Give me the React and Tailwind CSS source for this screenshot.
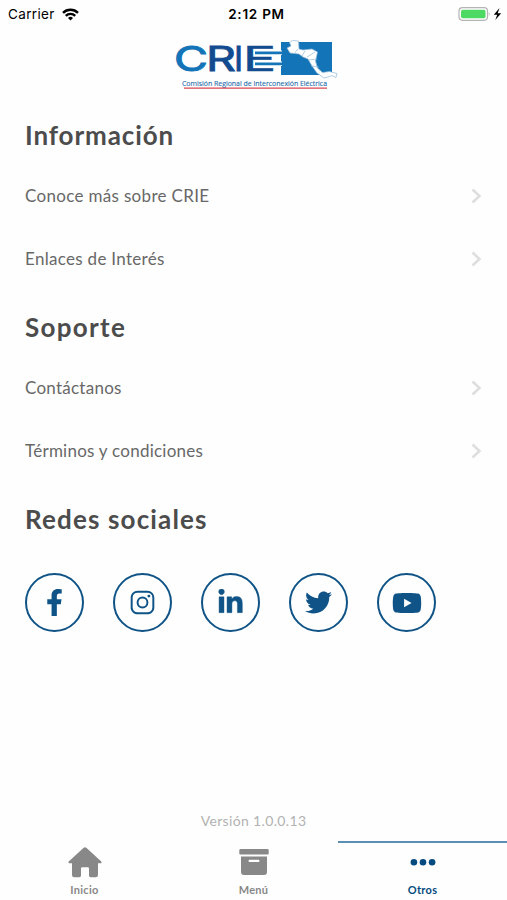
import { FaFacebookF, FaLinkedinIn, FaTwitter, FaYoutube } from 'react-icons/fa';
import { IoLogoInstagram } from 'react-icons/io5';

const sections = [
  {
    title: 'Información',
    titleClass: 'tracking-[0.9px]',
    items: [
      { label: 'Conoce más sobre CRIE', className: 'tracking-[0.32px]' },
      { label: 'Enlaces de Interés', className: 'tracking-[0.3px]' },
    ],
  },
  {
    title: 'Soporte',
    titleClass: 'tracking-[1.3px]',
    items: [
      { label: 'Contáctanos', className: 'tracking-[0.25px]' },
      { label: 'Términos y condiciones', className: 'tracking-[0.25px]' },
    ],
  },
];

const networks = [
  { name: 'Facebook', icon: <FaFacebookF className="size-[27px]" /> },
  { name: 'Instagram', icon: <IoLogoInstagram className="size-[27px]" /> },
  { name: 'LinkedIn', icon: <FaLinkedinIn className="size-[27px] stroke-current stroke-[8]" /> },
  { name: 'Twitter', icon: <FaTwitter className="size-[27px]" /> },
  { name: 'YouTube', icon: <FaYoutube className="size-[30px]" /> },
];

function StatusBar() {
  return (
    <div className="grid h-7 grid-cols-3 items-center font-[Inter,sans-serif] text-[13.5px] text-black">
      <div className="flex items-center gap-[7px] pl-2">
        <span className="tracking-[0.35px]">Carrier</span>
        <svg width="17" height="13" viewBox="0 0 17 13" fill="none" stroke="currentColor" strokeWidth="2.4">
          <path d="M1 4.8a10.6 10.6 0 0 1 15 0" />
          <path d="M3.8 7.8a6.6 6.6 0 0 1 9.4 0" />
          <path d="M8.5 12.6 6 10a3.5 3.5 0 0 1 5 0Z" fill="currentColor" stroke="none" />
        </svg>
      </div>
      <span className="pl-1.5 text-center font-semibold tracking-[0.75px]">2:12 PM</span>
      <div className="flex justify-end pr-[5px]">
        <svg width="44" height="14" viewBox="0 0 44 14">
          <rect x="1" y="0.7" width="28.5" height="12.6" rx="3.5" fill="none" stroke="#b4b4b4" strokeWidth="1.2" />
          <rect x="3" y="2.7" width="24.5" height="8.6" rx="1.8" fill="#4cd964" />
          <path d="M30.8 4.8q1.8 2.2 0 4.4Z" fill="#b4b4b4" />
          <path d="M41.5 1 35.8 7.7h3.4L37.3 13l5.9-6.8h-3.5Z" fill="#000" />
        </svg>
      </div>
    </div>
  );
}

function Logo() {
  return (
    <svg width="172" height="62" viewBox="-4 -10 172 62" className="ml-[170px]">
      <g fontFamily="Inter, sans-serif" fontSize="34">
        <text x="0" y="31" fill="#1474b8" stroke="#1474b8" strokeWidth="1" textLength="34" lengthAdjust="spacingAndGlyphs">
          C
        </text>
        <text x="32" y="31" fill="#124b8f" stroke="#124b8f" strokeWidth="0.8" textLength="30" lengthAdjust="spacingAndGlyphs">
          R
        </text>
        <text x="60" y="31" fill="#124b8f" stroke="#124b8f" strokeWidth="0.8">
          I
        </text>
        <text x="68.5" y="31" fill="#124b8f" stroke="#124b8f" strokeWidth="0.3" textLength="34" lengthAdjust="spacingAndGlyphs">
          E
        </text>
      </g>
      <path d="M107 2h51v33h-51z" fill="#1474b8" />
      <path d="M81 12.8h27M81 23.8h27" stroke="#fefefe" strokeWidth="4.6" />
      <path d="M81 12.8h27M81 23.8h27" stroke="#1474b8" strokeWidth="2.8" />
      <path
        d="m115.500 2.500 3-2 6 .5.5 8 4 1 9-1 5.500 3-2 9 2 7 5 4.500 7-1 7.500 2-1 4-4-2-4 1.500-4 1-7-5-5-7-4-7-5-2-4-3-9-1-3-5 4-2Z"
        fill="#fff"
        stroke="#93b9d5"
        strokeWidth="0.7"
      />
      <path d="m124 9-4 5m11-3-3 5m13-4-8 5m2 3 8-1m-6 7 8 1" fill="none" stroke="#93b9d5" strokeWidth="0.7" />
      <text x="8" y="46.3" fontFamily="Open Sans, sans-serif" fontSize="7.4" fill="#1768a8" stroke="#1768a8" strokeWidth="0.1" textLength="145" lengthAdjust="spacingAndGlyphs">
        Comisión Regional de Interconexión Eléctrica
      </text>
      <path d="M10 48.2h143" stroke="#d9464f" strokeWidth="1.2" />
    </svg>
  );
}

function Row({ label, className }) {
  return (
    <a href="#" className="flex h-[63px] items-center justify-between pr-[25px] text-[17px] text-[#686868]">
      <span className={className}>{label}</span>
      <svg width="11" height="16" viewBox="0 0 11 16" fill="none" stroke="#dedede" strokeWidth="2.5">
        <path d="m1.5 1.5 7 6.5-7 6.5" />
      </svg>
    </a>
  );
}

function Heading({ children, className }) {
  return (
    <h2 className={`${className} flex h-[66px] items-center pt-2 text-[26px] font-bold text-[#4c4c4c]`}>
      {children}
    </h2>
  );
}

function TabBar() {
  return (
    <nav className="grid h-[59px] grid-cols-3 text-[11px] font-bold text-[#888]">
      <a href="#" className="flex flex-col items-center border-t-2 border-transparent pt-1">
        <svg width="34" height="31" viewBox="0 0 34 31" fill="currentColor">
          <path d="M15.7.8a2 2 0 0 1 2.6 0L33 14.2c1.1 1 .6 2.1-.8 2.1H30V28a2.2 2.2 0 0 1-2.2 2.2h-5.2A1.6 1.6 0 0 1 21 28.6V21.5q0-1.2-1.2-1.2h-5.6q-1.2 0-1.2 1.2v7.1a1.6 1.6 0 0 1-1.6 1.6H6.2A2.2 2.2 0 0 1 4 28V16.3H1.8C.4 16.3-.1 15.2 1 14.2Z" />
        </svg>
        <span className="mt-1 leading-4 tracking-[0.3px]">Inicio</span>
      </a>
      <a href="#" className="flex flex-col items-center border-t-2 border-transparent pt-1">
        <svg width="30" height="31" viewBox="0 0 30 31" fill="currentColor">
          <rect x="0.3" y="2" width="29.4" height="5.6" rx="1.4" />
          <path
            fillRule="evenodd"
            d="M2 9.500h26V25a3 3 0 0 1-3 3H5a3 3 0 0 1-3-3ZM10.400 12.800a.8.8 0 0 0-.8.8v.6a.8.8 0 0 0 .8.8h9.200a.8.8 0 0 0 .8-.8v-.6a.8.8 0 0 0-.8-.8Z"
          />
        </svg>
        <span className="mt-1 leading-4 tracking-[0.3px]">Menú</span>
      </a>
      <a href="#" className="flex flex-col items-center border-t-2 border-t-[#5c8fb3] pt-1 text-[#054b80]">
        <svg width="26" height="31" viewBox="0 0 26 31" fill="currentColor">
          <circle cx="3.9" cy="15.3" r="3.3" />
          <circle cx="13" cy="15.3" r="3.3" />
          <circle cx="22.1" cy="15.3" r="3.3" />
        </svg>
        <span className="mt-1 leading-4 tracking-[0.3px]">Otros</span>
      </a>
    </nav>
  );
}

export default function App() {
  return (
    <div className="flex h-screen flex-col overflow-hidden bg-[#fefefe] font-[Lato,sans-serif]">
      <StatusBar />
      <header className="h-[70px] pt-0.5">
        <Logo />
      </header>
      <main className="flex flex-1 flex-col pl-[25px]">
        {sections.map((section) => (
          <section key={section.title}>
            <Heading className={section.titleClass}>{section.title}</Heading>
            {section.items.map((item) => (
              <Row key={item.label} {...item} />
            ))}
          </section>
        ))}
        <Heading className="tracking-[1.15px]">Redes sociales</Heading>
        <div className="flex gap-[29px] pt-[25px]">
          {networks.map((network) => (
            <a
              key={network.name}
              href="#"
              aria-label={network.name}
              className="flex size-[59px] items-center justify-center rounded-full border-2 border-[#105487] text-[#105487]"
            >
              {network.icon}
            </a>
          ))}
        </div>
        <p className="mt-auto mb-2.5 pr-[25px] text-center text-[14px] leading-5 tracking-[0.35px] text-[#b2b2b2]">
          Versión 1.0.0.13
        </p>
      </main>
      <TabBar />
    </div>
  );
}
